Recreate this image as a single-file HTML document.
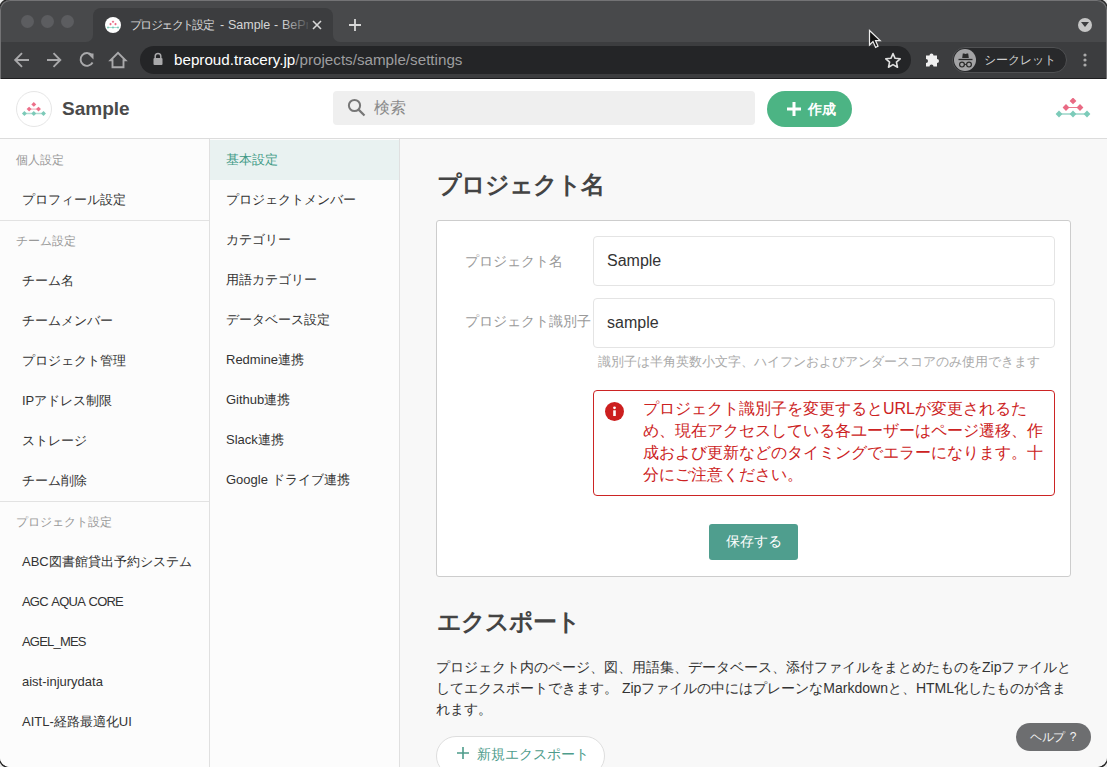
<!DOCTYPE html>
<html><head><meta charset="utf-8">
<style>
*{box-sizing:border-box;margin:0;padding:0}
html,body{width:1107px;height:767px;overflow:hidden;background:#ececec}
body{font-family:"Liberation Sans",sans-serif;position:relative}
.a{position:absolute;white-space:nowrap}
#win{position:absolute;left:0;top:0;width:1107px;height:767px;border-radius:10px;overflow:hidden;background:#fff;box-shadow:0 0 0 1.5px #2a2a2a}
#strip{position:absolute;left:0;top:0;width:1107px;height:44px;background:#3c3d3f}
.fr{position:absolute;background:#48494b}
#tool{position:absolute;left:0;top:44px;width:1107px;height:35px;background:#3c3d3f;border-bottom:1px solid #1e1e20}
.dot{position:absolute;top:15px;width:13px;height:13px;border-radius:50%;background:#5c5d60}
#tab{position:absolute;left:93px;top:8px;width:240px;height:36px;background:#3c3d3f;border-radius:8px 8px 0 0}
#omni{position:absolute;left:140px;top:46px;width:771px;height:28px;border-radius:14px;background:#242527}
#page{position:absolute;left:0;top:79px;width:1107px;height:688px;background:#f8f8f8}
#hdr{position:absolute;left:0;top:0;width:1107px;height:60px;background:#fff;border-bottom:1px solid #dcdcdc}
#side1{position:absolute;left:0;top:60px;width:210px;height:628px;background:#fcfcfc;border-right:1px solid #e0e0e0}
#side2{position:absolute;left:210px;top:60px;width:190px;height:628px;background:#fcfcfc;border-right:1px solid #e0e0e0}
.sh{position:absolute;left:16px;font-size:12px;color:#999;line-height:16px;white-space:nowrap}
.si{position:absolute;left:22px;margin-top:1px;font-size:13px;color:#333;line-height:18px;white-space:nowrap}
.s2{position:absolute;left:16px;margin-top:1px;font-size:13px;color:#333;line-height:18px;white-space:nowrap}
.hr1{position:absolute;left:0;width:209px;height:1px;background:#e2e2e2}
#main{position:absolute;left:400px;top:60px;width:707px;height:628px}
.h1{position:absolute;left:37px;font-size:24px;letter-spacing:-1px;margin-top:1px;font-weight:bold;color:#444;line-height:30px;white-space:nowrap}
#card{position:absolute;left:36px;top:81px;width:635px;height:357px;background:#fff;border:1px solid #cdcdcd;border-radius:3px}
.lbl{position:absolute;left:28px;font-size:14px;color:#9a9a9a;line-height:18px;white-space:nowrap}
.inp{position:absolute;left:156px;width:462px;height:50px;border:1px solid #e4e4e4;border-radius:4px;background:#fff}
.inp span{position:absolute;left:13px;top:14px;font-size:16px;color:#333;line-height:20px}
#alert{position:absolute;left:156px;top:169px;width:462px;height:106px;border:1px solid #cc2424;border-radius:4px;background:#fff}
#alert .t{position:absolute;left:49px;top:7px;font-size:16px;line-height:22px;color:#cc2222;white-space:nowrap}
#save{position:absolute;left:272px;top:303px;width:89px;height:36px;background:#4f9e8e;border-radius:3px;color:#fff;font-size:14px;line-height:34px;text-align:center}
.p{position:absolute;left:36px;margin-top:1px;font-size:14px;line-height:21px;color:#333;white-space:nowrap}
#exp{position:absolute;left:36px;top:597px;width:169px;height:40px;background:#fff;border:1px solid #dedede;border-radius:20px}
#help{position:absolute;left:1016px;top:723px;width:75px;height:28px;background:#6d6e70;border-radius:14px;color:#fff;font-size:13px;line-height:28px}
</style></head><body>
<div id="win">
  <div id="strip">
    <div class="fr" style="left:0;top:0;width:1107px;height:16px"></div>
    <div class="fr" style="left:0;top:0;width:93px;height:42px;border-bottom-right-radius:7px"></div>
    <div class="fr" style="left:333px;top:0;width:774px;height:42px;border-bottom-left-radius:7px"></div>
    <div class="dot" style="left:21px"></div>
    <div class="dot" style="left:41px"></div>
    <div class="dot" style="left:61px"></div>
    <div id="tab"></div>
    <!-- favicon -->
    <div class="a" style="left:105px;top:17px;width:16px;height:16px;border-radius:50%;background:#fff"></div>
    <svg class="a" style="left:107px;top:20px" width="12" height="9" viewBox="0 0 12 9"><path d="M6 0.5L7.3 1.8L6 3.1L4.7 1.8Z" fill="#e96a84"/><path d="M3.5 2.8L4.8 4.1L3.5 5.4L2.2 4.1Z" fill="#e96a84"/><path d="M8.5 2.8L9.8 4.1L8.5 5.4L7.2 4.1Z" fill="#e96a84"/><path d="M1 6.2L2.3 7.5L1 8.8L-0.3 7.5Z" fill="#7ccbb9"/><path d="M6 6.2L7.3 7.5L6 8.8L4.7 7.5Z" fill="#7ccbb9"/><path d="M11 6.2L12.3 7.5L11 8.8L9.7 7.5Z" fill="#7ccbb9"/><path d="M1 7.5H11" stroke="#7ccbb9" stroke-width="0.6"/></svg>
    <div class="a" style="left:130px;top:17px;font-size:11.5px;line-height:16px;color:#d6d6d6;letter-spacing:-1.6px">プロジェクト設定</div><div class="a" style="left:220px;top:17px;font-size:12.5px;line-height:16px;color:#d6d6d6;width:88px;overflow:hidden;word-spacing:0.3px">- Sample - BeProud</div>
    <div class="a" style="left:282px;top:14px;width:30px;height:22px;background:linear-gradient(90deg,rgba(60,61,63,0),#3c3d3f)"></div>
    <svg class="a" style="left:312px;top:20px" width="10" height="10" viewBox="0 0 10 10"><path d="M1 1L9 9M9 1L1 9" stroke="#d8d8d8" stroke-width="1.6"/></svg>
    <svg class="a" style="left:348px;top:18px" width="14" height="14" viewBox="0 0 14 14"><path d="M7 1V13M1 7H13" stroke="#d8d8d8" stroke-width="1.8"/></svg>
    <div class="a" style="left:1078px;top:18px;width:14px;height:14px;border-radius:50%;background:#c6c6c6"></div>
    <svg class="a" style="left:1081px;top:22px" width="8" height="6" viewBox="0 0 8 6"><path d="M0 0H8L4 5Z" fill="#3c3d3f"/></svg>
  </div>
  <div id="tool"></div>
  <div id="omni"></div>
  <svg class="a" style="left:12px;top:50px" width="120" height="20" viewBox="0 0 120 20">
    <g fill="none" stroke="#a9a9ab" stroke-width="1.9">
      <path d="M3.5 10H17M10 3.2L3.2 10L10 16.8"/>
      <path d="M35 10H48.5M41.5 3.2L48.3 10L41.5 16.8"/>
      <path d="M79.8 5.2A6.4 6.4 0 1 0 80.6 12.5"/>
      <path d="M100.5 17.2V10.3H98.5L106 2.8L113.5 10.3H111.5V17.2Z"/>
    </g>
    <path d="M75.5 3.6H81.5V9.6Z" fill="#a9a9ab"/>
  </svg>
  <svg class="a" style="left:152px;top:52px" width="12" height="14" viewBox="0 0 12 14"><path d="M3.2 6V4.2A2.8 2.8 0 0 1 8.8 4.2V6" fill="none" stroke="#a9a9ab" stroke-width="1.5"/><rect x="1.5" y="6" width="9" height="7" rx="1" fill="#a9a9ab"/></svg>
  <div class="a" style="left:174px;top:51px;font-size:15.2px;line-height:18px;color:#fff">beproud.tracery.jp<span style="color:#9d9d9f">/projects/sample/settings</span></div>
  <svg class="a" style="left:884px;top:52px" width="18" height="17" viewBox="0 0 18 17"><path d="M9 1.6L11.1 6.3L16.2 6.8L12.4 10.2L13.5 15.2L9 12.6L4.5 15.2L5.6 10.2L1.8 6.8L6.9 6.3Z" fill="none" stroke="#e0e0e0" stroke-width="1.6" stroke-linejoin="round"/></svg>
  <svg class="a" style="left:924px;top:52px" width="17" height="17" viewBox="0 0 17 17"><path d="M2 5H5.5A2 2 0 1 1 9.5 5H13V8.5A2 2 0 1 1 13 12.5V16H9.5A2 2 0 1 0 5.5 16H2V12.5A2 2 0 1 0 2 8.5Z" fill="#f0f0f0" transform="translate(0,-1.5)"/></svg>
  <div class="a" style="left:952px;top:46.5px;width:115px;height:26.5px;border-radius:14px;background:#28292b;border:1px solid #505153"></div>
  <div class="a" style="left:953.5px;top:48.8px;width:22.5px;height:22.5px;border-radius:50%;background:#a3a3a5"></div>
  <svg class="a" style="left:953.5px;top:48.8px" width="23" height="23" viewBox="0 0 23 23"><path d="M8.2 8.9L8.8 4.6Q9.2 4.2 10 4.6L11.5 5.1L13 4.6Q13.8 4.2 14.2 4.6L14.8 8.9Z" fill="#2b2b2b"/><path d="M4.5 10.5H18.5" stroke="#2b2b2b" stroke-width="1.3"/><circle cx="8" cy="15.6" r="2.4" fill="none" stroke="#2b2b2b" stroke-width="1.2"/><circle cx="15" cy="15.6" r="2.4" fill="none" stroke="#2b2b2b" stroke-width="1.2"/><path d="M10.4 15.4H12.6" stroke="#2b2b2b" stroke-width="1"/></svg>
  <div class="a" style="left:984px;top:52px;font-size:12px;line-height:16px;color:#cfcfcf">シークレット</div>
  <svg class="a" style="left:1082px;top:52px" width="6" height="16" viewBox="0 0 6 16"><circle cx="3" cy="3" r="1.6" fill="#aaa"/><circle cx="3" cy="8" r="1.6" fill="#aaa"/><circle cx="3" cy="13" r="1.6" fill="#aaa"/></svg>
  <svg class="a" style="left:868px;top:29px" width="14" height="20" viewBox="0 0 14 20"><path d="M1.5 1.5V16L5 12.6L7.6 18.4L10 17.3L7.5 11.6H12.2Z" fill="#111" stroke="#eee" stroke-width="1.2"/></svg>

  <div class="a" style="left:0;top:0;width:1107px;height:79px;border:1px solid #737375;border-bottom:none;border-radius:10px 10px 0 0"></div>
  <div id="page">
    <div id="hdr">
      <div class="a" style="left:16px;top:12px;width:36px;height:36px;border-radius:50%;border:1px solid #e6e6e6;background:#fff"></div>
      <svg class="a" style="left:22px;top:22px;overflow:visible" width="26" height="18" viewBox="0 0 26 18"><path d="M7.1 8.1H16.5" stroke="#f2a9b8" stroke-width="1"/><path d="M2.4 12.5H21.5" stroke="#b3ddd4" stroke-width="1.6"/><path d="M11.8 0.9499999999999997L14.25 3.4L11.8 5.85L9.350000000000001 3.4Z" fill="#ec6f89"/><path d="M7.1 5.6499999999999995L9.55 8.1L7.1 10.55L4.6499999999999995 8.1Z" fill="#ec6f89"/><path d="M16.5 5.6499999999999995L18.95 8.1L16.5 10.55L14.05 8.1Z" fill="#ec6f89"/><path d="M2.4 10.05L4.85 12.5L2.4 14.95L-0.050000000000000266 12.5Z" fill="#7ccab8"/><path d="M11.8 10.05L14.25 12.5L11.8 14.95L9.350000000000001 12.5Z" fill="#7ccab8"/><path d="M21.5 10.05L23.95 12.5L21.5 14.95L19.05 12.5Z" fill="#7ccab8"/></svg>
      <div class="a" style="left:62px;top:19px;font-size:19px;line-height:22px;font-weight:bold;color:#4a4a4a">Sample</div>
      <div class="a" style="left:333px;top:12px;width:422px;height:34px;border-radius:4px;background:#efefef"></div>
      <svg class="a" style="left:347px;top:98px;top:19px" width="20" height="20" viewBox="0 0 20 20"><circle cx="7.5" cy="7.5" r="5.6" fill="none" stroke="#777" stroke-width="2"/><path d="M11.6 11.6L17.5 17.5" stroke="#777" stroke-width="2.2"/></svg>
      <div class="a" style="left:374px;top:19px;font-size:16px;line-height:20px;color:#8a8a8a">検索</div>
      <div class="a" style="left:767px;top:12px;width:85px;height:36px;border-radius:18px;background:#4cb484"></div>
      <svg class="a" style="left:787px;top:23px" width="14" height="14" viewBox="0 0 14 14"><path d="M7 0V14M0 7H14" stroke="#fff" stroke-width="3"/></svg>
      <div class="a" style="left:808px;top:21px;font-size:14px;line-height:18px;font-weight:bold;color:#fff">作成</div>
      <svg class="a" style="left:1055px;top:19px" width="36" height="24" viewBox="0 0 36 24">
        <path d="M11 9.5H25" stroke="#ea7a8f" stroke-width="1.2"/><path d="M4 16H32" stroke="#9ad4c7" stroke-width="1.5"/>
        <path d="M18 -0.5L21.4 2.9L18 6.3L14.6 2.9Z" fill="#e96a84"/>
        <path d="M11 6.1L14.4 9.5L11 12.9L7.6 9.5Z" fill="#e96a84"/><path d="M25 6.1L28.4 9.5L25 12.9L21.6 9.5Z" fill="#e96a84"/>
        <path d="M4 12.6L7.4 16L4 19.4L0.6 16Z" fill="#7ccbb9"/><path d="M18 12.6L21.4 16L18 19.4L14.6 16Z" fill="#7ccbb9"/><path d="M32 12.6L35.4 16L32 19.4L28.6 16Z" fill="#7ccbb9"/>
      </svg>
    </div>
    <div id="side1">
      <div class="sh" style="top:13px">個人設定</div>
      <div class="si" style="top:51px">プロフィール設定</div>
      <div class="hr1" style="top:81px"></div>
      <div class="sh" style="top:94px">チーム設定</div>
      <div class="si" style="top:132px">チーム名</div>
      <div class="si" style="top:172px">チームメンバー</div>
      <div class="si" style="top:212px">プロジェクト管理</div>
      <div class="si" style="top:252px">IPアドレス制限</div>
      <div class="si" style="top:292px">ストレージ</div>
      <div class="si" style="top:332px">チーム削除</div>
      <div class="hr1" style="top:362px"></div>
      <div class="sh" style="top:375px">プロジェクト設定</div>
      <div class="si" style="top:413px">ABC図書館貸出予約システム</div>
      <div class="si" style="top:453px;letter-spacing:-0.8px;word-spacing:1.5px">AGC AQUA CORE</div>
      <div class="si" style="top:493px;letter-spacing:-0.8px">AGEL_MES</div>
      <div class="si" style="top:533px">aist-injurydata</div>
      <div class="si" style="top:573px">AITL-経路最適化UI</div>
    </div>
    <div id="side2">
      <div class="a" style="left:0;top:1px;width:189px;height:40px;background:#e9f2f1"></div>
      <div class="s2" style="top:11px;color:#3f9a86">基本設定</div>
      <div class="s2" style="top:51px">プロジェクトメンバー</div>
      <div class="s2" style="top:91px">カテゴリー</div>
      <div class="s2" style="top:131px">用語カテゴリー</div>
      <div class="s2" style="top:171px">データベース設定</div>
      <div class="s2" style="top:211px">Redmine連携</div>
      <div class="s2" style="top:251px">Github連携</div>
      <div class="s2" style="top:291px">Slack連携</div>
      <div class="s2" style="top:331px">Google ドライブ連携</div>
    </div>
    <div id="main">
      <div class="h1" style="top:30px">プロジェクト名</div>
      <div id="card">
        <div class="lbl" style="top:31px">プロジェクト名</div>
        <div class="inp" style="top:15px"><span>Sample</span></div>
        <div class="lbl" style="top:91px">プロジェクト識別子</div>
        <div class="inp" style="top:77px"><span>sample</span></div>
        <div class="a" style="left:161px;top:133px;font-size:13px;line-height:16px;color:#aaa">識別子は半角英数小文字、ハイフンおよびアンダースコアのみ使用できます</div>
        <div id="alert">
          <div class="a" style="left:11px;top:11px;width:19px;height:19px;border-radius:50%;background:#cc1f1f"></div><svg class="a" style="left:11px;top:11px" width="19" height="19" viewBox="0 0 19 19"><circle cx="9.5" cy="5.8" r="1.4" fill="#fff"/><path d="M9.5 8.3V14" stroke="#fff" stroke-width="2.6"/></svg>
          <div class="t">プロジェクト識別子を変更するとURLが変更されるた<br>め、現在アクセスしている各ユーザーはページ遷移、作<br>成および更新などのタイミングでエラーになります。十<br>分にご注意ください。</div>
        </div>
        <div id="save">保存する</div>
      </div>
      <div class="h1" style="top:467px">エクスポート</div>
      <div class="p" style="top:517px">プロジェクト内のページ、図、用語集、データベース、添付ファイルをまとめたものをZipファイルと<br>してエクスポートできます。 Zipファイルの中にはプレーンなMarkdownと、HTML化したものが含ま<br>れます。</div>
      <div id="exp"><svg class="a" style="left:20px;top:10px" width="12" height="12" viewBox="0 0 12 12"><path d="M6 0V12M0 6H12" stroke="#4e9c8b" stroke-width="1.6"/></svg><div class="a" style="left:40px;top:8px;font-size:14px;line-height:18px;color:#4e9c8b">新規エクスポート</div></div>
    </div>
  </div>
  <div id="help"><div class="a" style="left:14px;top:6px;font-size:12px;line-height:16px;color:#f4f4f4;letter-spacing:-0.4px;word-spacing:2px">ヘルプ ?</div></div>
</div>
</body></html>
